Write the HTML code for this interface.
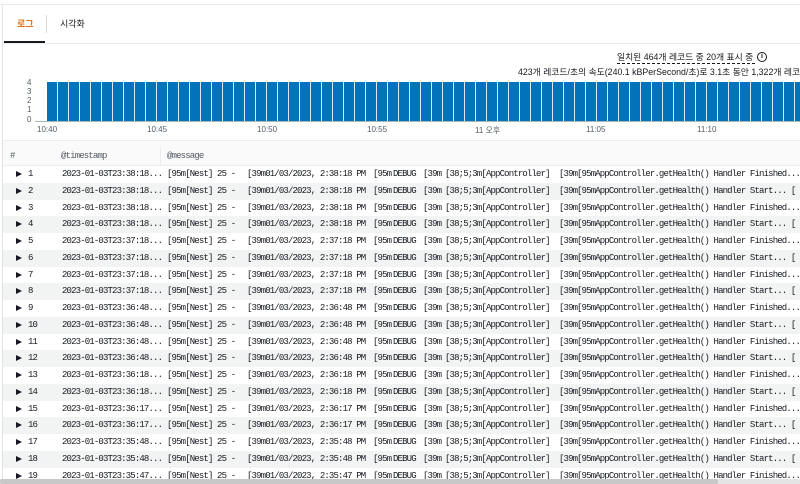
<!DOCTYPE html>
<html><head><meta charset="utf-8"><style>
*{margin:0;padding:0;box-sizing:border-box}
body{width:800px;height:484px;overflow:hidden;background:#fff;position:relative;font-family:"Liberation Sans","Noto Sans CJK KR",sans-serif;color:#16191f}
.a{position:absolute;white-space:nowrap}
.m{font-family:"Liberation Mono","DejaVu Sans Mono",monospace;font-size:9px;letter-spacing:-0.85px;color:#16191f}
.row{position:absolute;left:3px;right:0;height:16.75px}
.row.g{background:#f2f3f3}
.row span{position:absolute;top:3px;white-space:nowrap;font-family:"Liberation Mono",monospace;font-size:9px;letter-spacing:-0.85px;color:#16191f}
.tri{position:absolute;left:13px;top:5px;width:0;height:0;border-left:6px solid #16191f;border-top:3.5px solid transparent;border-bottom:3.5px solid transparent}
.n{left:25px}.t{left:59px}.s1{left:164px}.s2{left:244px}.s3{left:370px}.s4{left:390px}.s5{left:420px}.s6{left:442px}.s7{left:556px}.s8{left:574px}
.yl{position:absolute;left:27px;font-size:8px;color:#545b64}
.xl{position:absolute;top:125px;font-size:8px;color:#545b64}
</style></head><body>
<div class="a" style="left:0;top:0;width:800px;height:5px;border-bottom:1px solid #eaeded"></div>
<div class="a" style="left:2px;top:5px;width:1px;height:479px;background:#e1e4e4"></div>
<div class="a" style="left:17px;top:17px;font-size:9px;color:#ec7211;font-weight:bold">로그</div>
<div class="a" style="left:46px;top:15px;width:1px;height:18px;background:#d5dbdb"></div>
<div class="a" style="left:60px;top:17px;font-size:9px;color:#16191f">시각화</div>
<div class="a" style="left:4px;top:41px;width:41px;height:2px;background:#16191f"></div>
<div class="a" style="left:3px;top:43px;width:797px;height:1px;background:#eaeded"></div>
<div class="a" style="left:617px;top:51px;width:138px;font-size:8.8px;border-bottom:1px dashed #16191f;line-height:12px;overflow:hidden">일치된 464개 레코드 중 20개 표시 중</div>
<div class="a" style="left:757px;top:52px;width:10px;height:10px;border:1.2px solid #16191f;border-radius:50%;font-size:7px;font-weight:bold;text-align:center;line-height:8px">i</div>
<div class="a" style="left:518px;top:65px;font-size:8.8px">423개 레코드/초의 속도(240.1 kBPerSecond/초)로 3.1초 동안 1,322개 레코</div>
<div class="yl" style="top:78px">4</div><div class="yl" style="top:87px">3</div><div class="yl" style="top:96px">2</div><div class="yl" style="top:105px">1</div><div class="yl" style="top:115px">0</div>
<div class="a" style="left:47px;top:82px;width:753px;height:39px;background:repeating-linear-gradient(90deg,#0073bb 0,#0073bb 10px,#d9e9f4 10px,#d9e9f4 11px)"></div>
<div class="a" style="left:35px;top:121px;width:765px;height:1px;background:#aab7b8"></div>
<div class="xl" style="left:37px">10:40</div><div class="xl" style="left:147px">10:45</div><div class="xl" style="left:257px">10:50</div><div class="xl" style="left:367px">10:55</div><div class="xl" style="left:475px">11 오후</div><div class="xl" style="left:586px">11:05</div><div class="xl" style="left:697px">11:10</div>
<div class="a" style="left:3px;top:140px;width:797px;height:1px;background:#eaeded"></div>
<div class="a" style="left:3px;top:141px;width:797px;height:25px;background:#fafafa;border-bottom:1px solid #eaeded"></div>
<div class="a m" style="left:10px;top:151px;color:#545b64">#</div>
<div class="a m" style="left:61px;top:151px;color:#545b64">@timestamp</div>
<div class="a" style="left:160px;top:147px;width:1px;height:19px;background:#eaeded"></div>
<div class="a m" style="left:167px;top:151px;color:#545b64">@message</div>

<div class="row" style="top:166px"><i class="tri"></i><span class="n">1</span><span class="t">2023-01-03T23:38:18...</span><span class="s1">[95m[Nest] 25 -</span><span class="s2">[39m01/03/2023, 2:38:18 PM</span><span class="s3">[95m</span><span class="s4">DEBUG</span><span class="s5">[39m</span><span class="s6">[38;5;3m[AppController]</span><span class="s7">[39m</span><span class="s8">[95mAppController.getHealth() Handler Finished...</span></div>
<div class="row g" style="top:182.75px"><i class="tri"></i><span class="n">2</span><span class="t">2023-01-03T23:38:18...</span><span class="s1">[95m[Nest] 25 -</span><span class="s2">[39m01/03/2023, 2:38:18 PM</span><span class="s3">[95m</span><span class="s4">DEBUG</span><span class="s5">[39m</span><span class="s6">[38;5;3m[AppController]</span><span class="s7">[39m</span><span class="s8">[95mAppController.getHealth() Handler Start... [</span></div>
<div class="row" style="top:199.5px"><i class="tri"></i><span class="n">3</span><span class="t">2023-01-03T23:38:18...</span><span class="s1">[95m[Nest] 25 -</span><span class="s2">[39m01/03/2023, 2:38:18 PM</span><span class="s3">[95m</span><span class="s4">DEBUG</span><span class="s5">[39m</span><span class="s6">[38;5;3m[AppController]</span><span class="s7">[39m</span><span class="s8">[95mAppController.getHealth() Handler Finished...</span></div>
<div class="row g" style="top:216.25px"><i class="tri"></i><span class="n">4</span><span class="t">2023-01-03T23:38:18...</span><span class="s1">[95m[Nest] 25 -</span><span class="s2">[39m01/03/2023, 2:38:18 PM</span><span class="s3">[95m</span><span class="s4">DEBUG</span><span class="s5">[39m</span><span class="s6">[38;5;3m[AppController]</span><span class="s7">[39m</span><span class="s8">[95mAppController.getHealth() Handler Start... [</span></div>
<div class="row" style="top:233px"><i class="tri"></i><span class="n">5</span><span class="t">2023-01-03T23:37:18...</span><span class="s1">[95m[Nest] 25 -</span><span class="s2">[39m01/03/2023, 2:37:18 PM</span><span class="s3">[95m</span><span class="s4">DEBUG</span><span class="s5">[39m</span><span class="s6">[38;5;3m[AppController]</span><span class="s7">[39m</span><span class="s8">[95mAppController.getHealth() Handler Finished...</span></div>
<div class="row g" style="top:249.75px"><i class="tri"></i><span class="n">6</span><span class="t">2023-01-03T23:37:18...</span><span class="s1">[95m[Nest] 25 -</span><span class="s2">[39m01/03/2023, 2:37:18 PM</span><span class="s3">[95m</span><span class="s4">DEBUG</span><span class="s5">[39m</span><span class="s6">[38;5;3m[AppController]</span><span class="s7">[39m</span><span class="s8">[95mAppController.getHealth() Handler Start... [</span></div>
<div class="row" style="top:266.5px"><i class="tri"></i><span class="n">7</span><span class="t">2023-01-03T23:37:18...</span><span class="s1">[95m[Nest] 25 -</span><span class="s2">[39m01/03/2023, 2:37:18 PM</span><span class="s3">[95m</span><span class="s4">DEBUG</span><span class="s5">[39m</span><span class="s6">[38;5;3m[AppController]</span><span class="s7">[39m</span><span class="s8">[95mAppController.getHealth() Handler Finished...</span></div>
<div class="row g" style="top:283.25px"><i class="tri"></i><span class="n">8</span><span class="t">2023-01-03T23:37:18...</span><span class="s1">[95m[Nest] 25 -</span><span class="s2">[39m01/03/2023, 2:37:18 PM</span><span class="s3">[95m</span><span class="s4">DEBUG</span><span class="s5">[39m</span><span class="s6">[38;5;3m[AppController]</span><span class="s7">[39m</span><span class="s8">[95mAppController.getHealth() Handler Start... [</span></div>
<div class="row" style="top:300px"><i class="tri"></i><span class="n">9</span><span class="t">2023-01-03T23:36:48...</span><span class="s1">[95m[Nest] 25 -</span><span class="s2">[39m01/03/2023, 2:36:48 PM</span><span class="s3">[95m</span><span class="s4">DEBUG</span><span class="s5">[39m</span><span class="s6">[38;5;3m[AppController]</span><span class="s7">[39m</span><span class="s8">[95mAppController.getHealth() Handler Finished...</span></div>
<div class="row g" style="top:316.75px"><i class="tri"></i><span class="n">10</span><span class="t">2023-01-03T23:36:48...</span><span class="s1">[95m[Nest] 25 -</span><span class="s2">[39m01/03/2023, 2:36:48 PM</span><span class="s3">[95m</span><span class="s4">DEBUG</span><span class="s5">[39m</span><span class="s6">[38;5;3m[AppController]</span><span class="s7">[39m</span><span class="s8">[95mAppController.getHealth() Handler Start... [</span></div>
<div class="row" style="top:333.5px"><i class="tri"></i><span class="n">11</span><span class="t">2023-01-03T23:36:48...</span><span class="s1">[95m[Nest] 25 -</span><span class="s2">[39m01/03/2023, 2:36:48 PM</span><span class="s3">[95m</span><span class="s4">DEBUG</span><span class="s5">[39m</span><span class="s6">[38;5;3m[AppController]</span><span class="s7">[39m</span><span class="s8">[95mAppController.getHealth() Handler Finished...</span></div>
<div class="row g" style="top:350.25px"><i class="tri"></i><span class="n">12</span><span class="t">2023-01-03T23:36:48...</span><span class="s1">[95m[Nest] 25 -</span><span class="s2">[39m01/03/2023, 2:36:48 PM</span><span class="s3">[95m</span><span class="s4">DEBUG</span><span class="s5">[39m</span><span class="s6">[38;5;3m[AppController]</span><span class="s7">[39m</span><span class="s8">[95mAppController.getHealth() Handler Start... [</span></div>
<div class="row" style="top:367px"><i class="tri"></i><span class="n">13</span><span class="t">2023-01-03T23:36:18...</span><span class="s1">[95m[Nest] 25 -</span><span class="s2">[39m01/03/2023, 2:36:18 PM</span><span class="s3">[95m</span><span class="s4">DEBUG</span><span class="s5">[39m</span><span class="s6">[38;5;3m[AppController]</span><span class="s7">[39m</span><span class="s8">[95mAppController.getHealth() Handler Finished...</span></div>
<div class="row g" style="top:383.75px"><i class="tri"></i><span class="n">14</span><span class="t">2023-01-03T23:36:18...</span><span class="s1">[95m[Nest] 25 -</span><span class="s2">[39m01/03/2023, 2:36:18 PM</span><span class="s3">[95m</span><span class="s4">DEBUG</span><span class="s5">[39m</span><span class="s6">[38;5;3m[AppController]</span><span class="s7">[39m</span><span class="s8">[95mAppController.getHealth() Handler Start... [</span></div>
<div class="row" style="top:400.5px"><i class="tri"></i><span class="n">15</span><span class="t">2023-01-03T23:36:17...</span><span class="s1">[95m[Nest] 25 -</span><span class="s2">[39m01/03/2023, 2:36:17 PM</span><span class="s3">[95m</span><span class="s4">DEBUG</span><span class="s5">[39m</span><span class="s6">[38;5;3m[AppController]</span><span class="s7">[39m</span><span class="s8">[95mAppController.getHealth() Handler Finished...</span></div>
<div class="row g" style="top:417.25px"><i class="tri"></i><span class="n">16</span><span class="t">2023-01-03T23:36:17...</span><span class="s1">[95m[Nest] 25 -</span><span class="s2">[39m01/03/2023, 2:36:17 PM</span><span class="s3">[95m</span><span class="s4">DEBUG</span><span class="s5">[39m</span><span class="s6">[38;5;3m[AppController]</span><span class="s7">[39m</span><span class="s8">[95mAppController.getHealth() Handler Start... [</span></div>
<div class="row" style="top:434px"><i class="tri"></i><span class="n">17</span><span class="t">2023-01-03T23:35:48...</span><span class="s1">[95m[Nest] 25 -</span><span class="s2">[39m01/03/2023, 2:35:48 PM</span><span class="s3">[95m</span><span class="s4">DEBUG</span><span class="s5">[39m</span><span class="s6">[38;5;3m[AppController]</span><span class="s7">[39m</span><span class="s8">[95mAppController.getHealth() Handler Finished...</span></div>
<div class="row g" style="top:450.75px"><i class="tri"></i><span class="n">18</span><span class="t">2023-01-03T23:35:48...</span><span class="s1">[95m[Nest] 25 -</span><span class="s2">[39m01/03/2023, 2:35:48 PM</span><span class="s3">[95m</span><span class="s4">DEBUG</span><span class="s5">[39m</span><span class="s6">[38;5;3m[AppController]</span><span class="s7">[39m</span><span class="s8">[95mAppController.getHealth() Handler Start... [</span></div>
<div class="row" style="top:467.5px"><i class="tri"></i><span class="n">19</span><span class="t">2023-01-03T23:35:47...</span><span class="s1">[95m[Nest] 25 -</span><span class="s2">[39m01/03/2023, 2:35:47 PM</span><span class="s3">[95m</span><span class="s4">DEBUG</span><span class="s5">[39m</span><span class="s6">[38;5;3m[AppController]</span><span class="s7">[39m</span><span class="s8">[95mAppController.getHealth() Handler Finished...</span></div>
<div class="a" style="left:0;top:479px;width:800px;height:5px;background:#e4e4e4"></div>
<div class="a" style="left:0;top:479px;width:718px;height:5px;background:#c8c8c8;border-radius:2px"></div>
</body></html>
